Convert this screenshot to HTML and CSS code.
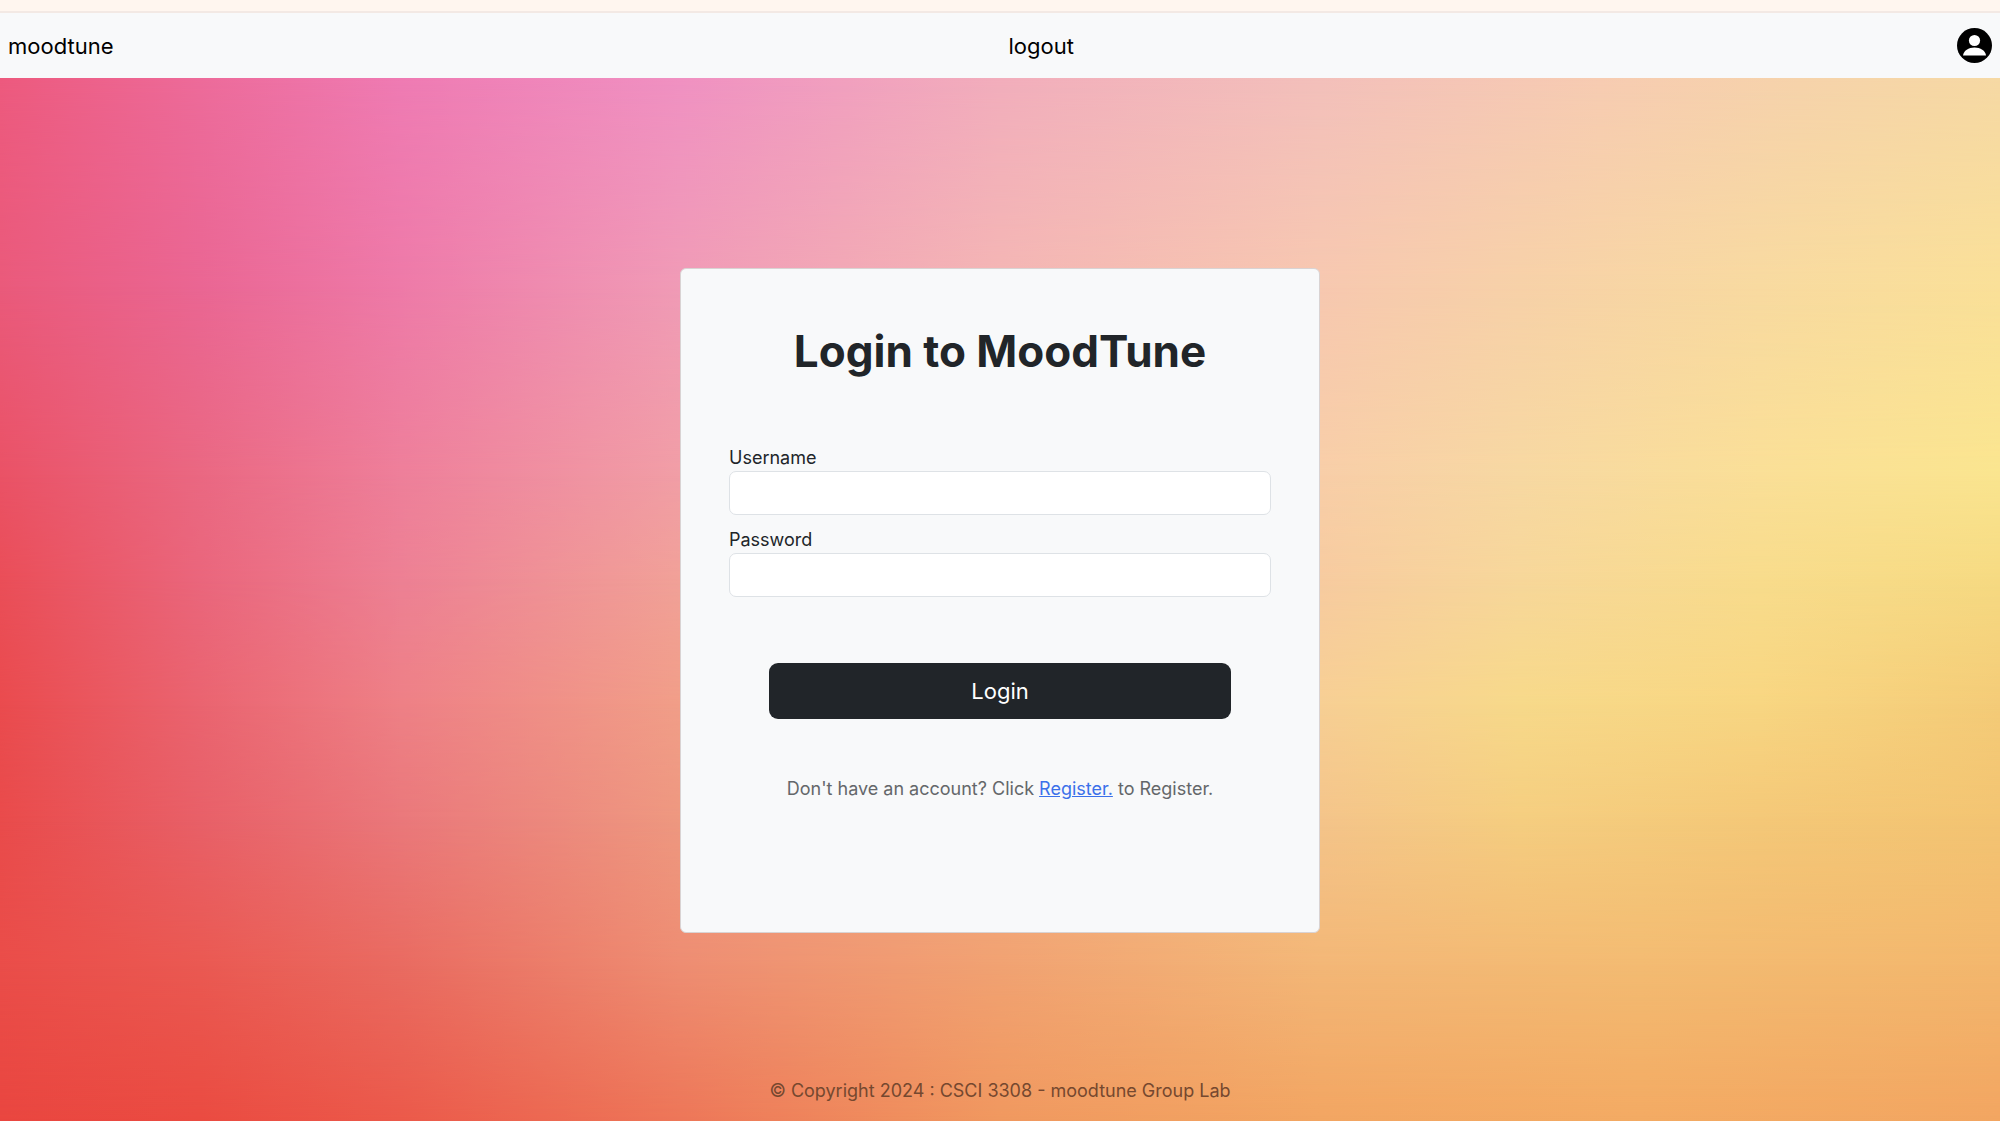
FILE: index.html
```html
<!DOCTYPE html>
<html lang="en">
<head>
<meta charset="UTF-8">
<meta name="viewport" content="width=device-width, initial-scale=1.0">
<title>MoodTune - Login</title>
<link rel="stylesheet" href="styles.css">
</head>
<body>
    <div class="top-strip"></div>
    <header>
        <nav class="navbar">
            <a href="#" class="nav-link nav-brand">moodtune</a>
            <a href="#" class="nav-link">logout</a>
            <a href="#" class="nav-profile" aria-label="Profile">
                <svg width="35" height="35" viewBox="0 0 35 35" aria-hidden="true">
                    <circle cx="17.5" cy="17.5" r="17.5" fill="#000"/>
                    <circle cx="17.5" cy="12.5" r="5.6" fill="#fff"/>
                    <path d="M6 27.5c.6-5 5.600-8 11.500-8s11 3 11.500 8z" fill="#fff"/>
                </svg>
            </a>
        </nav>
    </header>

    <div class="page">
        <!-- mesh gradient, each band fades in over the one before -->
        <div class="mesh" aria-hidden="true">
            <div class="band band-1"></div>
            <div class="band band-2"></div>
            <div class="band band-3"></div>
            <div class="band band-4"></div>
            <div class="band band-5"></div>
            <div class="band band-6"></div>
            <div class="band band-7"></div>
            <div class="band band-8"></div>
        </div>

        <main>
            <form class="card">
                <h1>Login to MoodTune</h1>
                <div class="field">
                    <label for="username">Username</label>
                    <input type="text" id="username" name="username">
                </div>
                <div class="field">
                    <label for="password">Password</label>
                    <input type="password" id="password" name="password">
                </div>
                <button type="submit" class="btn-login">Login</button>
                <p class="register">Don't have an account? Click <a href="#">Register.</a> to Register.</p>
            </form>
        </main>

        <footer>© Copyright 2024 : CSCI 3308 - moodtune Group Lab</footer>
    </div>
</body>
</html>
```
FILE: styles.css
```css
* {
    box-sizing: border-box;
}

body {
    margin: 0;
    min-height: 100vh;
    display: flex;
    flex-direction: column;
    font-family: Inter, "Liberation Sans", sans-serif;
    font-size: 18px;
    line-height: 28px;
    color: #212529;
}

.top-strip {
    height: 13px;
    background-color: #fff6ef;
    border-bottom: 2px solid #f3e9e4;
}

/* Navbar */
.navbar {
    display: flex;
    justify-content: space-between;
    align-items: center;
    height: 65px;
    padding: 0 8px;
    background-color: #f8f9fa;
}

.nav-link {
    color: #000;
    font-size: 22px;
    text-decoration: none;
}

.nav-brand {
    margin-right: 12px;
}

.nav-profile {
    display: flex;
}

/* Background */
.page {
    position: relative;
    flex: 1;
    display: flex;
    flex-direction: column;
}

.mesh,
.band {
    position: absolute;
    inset: 0;
}

.mesh {
    z-index: -1;
}

.band-1 {
    background: linear-gradient(90deg, #ed5a7e 0%, #ed6b9a 10%, #ef7bb3 20%, #f091c2 34%, #f2aebc 50%, #f3c0bb 66%, #f7ccb2 80%, #f6d3ab 90%, #f6d9a4 100%);
}

.band-2 {
    background: linear-gradient(90deg, #ea5a7b 0%, #ea6693 10%, #ee7aa8 20%, #f09bb6 34%, #f4b6b4 50%, #f7c8b0 66%, #f7d1a8 76%, #f8daa0 88%, #fae098 100%);
    mask-image: linear-gradient(transparent 0%, #000 20%);
}

.band-3 {
    background: linear-gradient(90deg, #ea5266 0%, #ea6882 10%, #ee7f9a 20%, #f19ea6 34%, #f4b6a8 50%, #f8cea8 66%, #f7d8a2 76%, #fadf97 88%, #fae58f 100%);
    mask-image: linear-gradient(transparent 20%, #000 38%);
}

.band-4 {
    background: linear-gradient(90deg, #ea4e58 0%, #ea667c 10%, #ed8094 20%, #f1a198 34%, #f4b69c 50%, #f7cba0 66%, #f7d79a 76%, #f8dc8c 88%, #f6da82 100%);
    mask-image: linear-gradient(transparent 38%, #000 48%);
}

.band-5 {
    background: linear-gradient(90deg, #ea4b4e 0%, #ea6470 10%, #ee8086 20%, #f19e88 34%, #f4b68c 50%, #f7cf94 66%, #f7d98a 76%, #f8d682 88%, #f4cb77 100%);
    mask-image: linear-gradient(transparent 48%, #000 60%);
}

.band-6 {
    background: linear-gradient(90deg, #e94b4b 0%, #e86068 10%, #ea787b 20%, #ee9880 34%, #f2ac80 50%, #f4c48a 66%, #f5ce80 76%, #f4c878 88%, #f3c472 100%);
    mask-image: linear-gradient(transparent 60%, #000 71%);
}

.band-7 {
    background: linear-gradient(90deg, #ea4d49 0%, #ea5952 10%, #e96b61 20%, #ee8d72 34%, #f1a272 50%, #f3b777 66%, #f3bb72 82%, #f3b76d 100%);
    mask-image: linear-gradient(transparent 71%, #000 85%);
}

.band-8 {
    background: linear-gradient(90deg, #e94640 0%, #ea4b41 10%, #eb594a 20%, #ed7658 34%, #f0985f 50%, #f2a562 66%, #f3aa63 82%, #f2a561 100%);
    mask-image: linear-gradient(transparent 85%, #000 100%);
}

/* Login card */
main {
    flex: 1;
    display: flex;
    justify-content: center;
    align-items: flex-start;
    padding: 190px 0 32px;
}

.card {
    display: flex;
    flex-direction: column;
    width: 32%;
    min-width: 520px;
    min-height: 665px;
    padding: 48px 48px 64px;
    background-color: #f8f9fa;
    border: 1px solid #d9d3d3;
    border-radius: 6px;
}

h1 {
    margin: 0 0 60px;
    font-size: 44px;
    line-height: 68px;
    font-weight: 700;
    text-align: center;
}

.field {
    display: flex;
    flex-direction: column;
    margin-bottom: 12px;
}

.field label {
    line-height: 26px;
}

.field input {
    height: 44px;
    padding: 6px 12px;
    font: inherit;
    background-color: #fff;
    border: 1px solid #dee2e6;
    border-radius: 7px;
}

.btn-login {
    height: 56px;
    margin: 54px 40px 56px;
    font-family: inherit;
    font-size: 22px;
    color: #fff;
    background-color: #212529;
    border: none;
    border-radius: 9px;
    cursor: pointer;
}

.register {
    margin: 0;
    color: #64676a;
    text-align: center;
}

.register a {
    color: #3b70ea;
}

footer {
    padding: 16px;
    color: #75482f;
    text-align: center;
}
```
